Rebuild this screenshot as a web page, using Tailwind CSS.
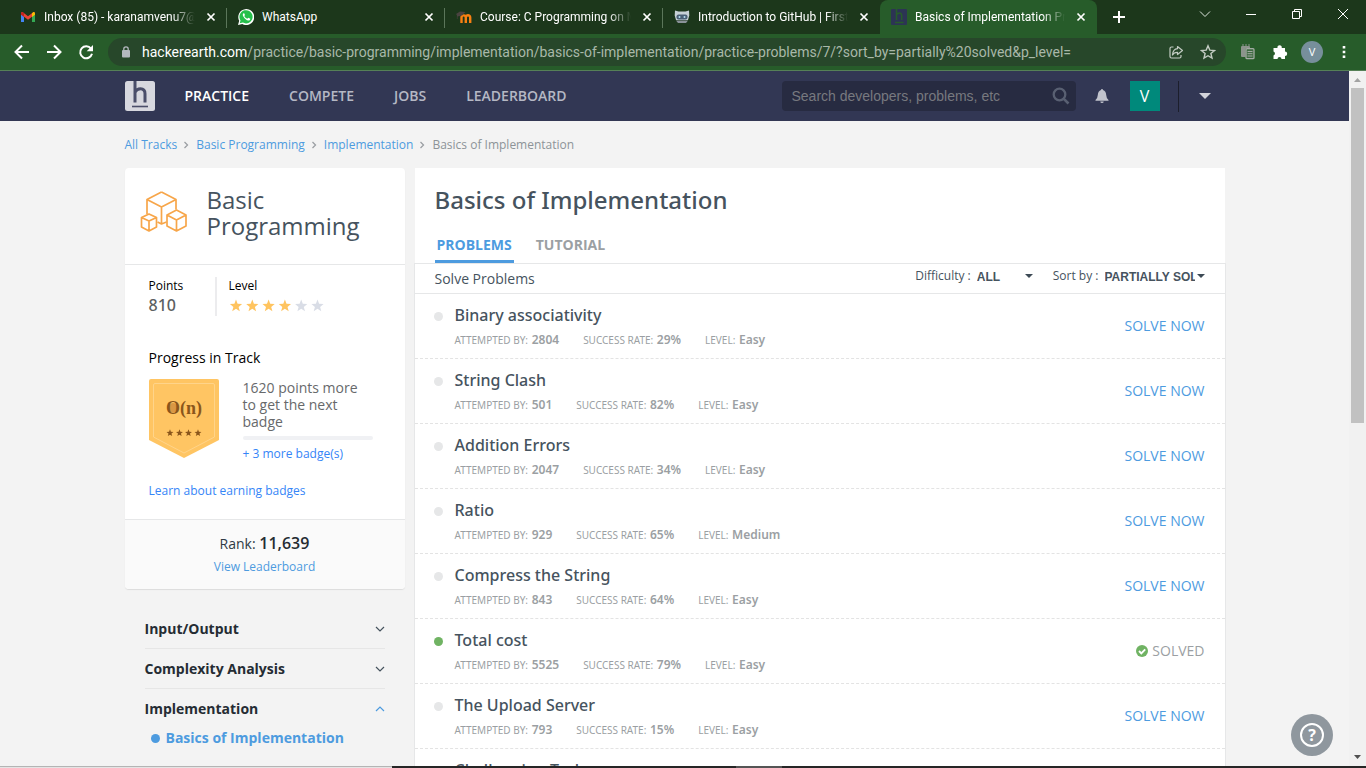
<!DOCTYPE html>
<html lang="en">
<head>
<meta charset="utf-8">
<title>Basics of Implementation Practice Problems</title>
<script src="https://cdn.jsdelivr.net/npm/@tailwindcss/browser@4"></script>
</head>
<body class="h-screen overflow-hidden flex flex-col bg-[#f3f3f3] font-['Open_Sans','Noto_Sans',sans-serif] text-[#46535e]">

<!-- Browser tab strip -->
<header class="shrink-0">
  <div class="h-[34px] bg-[#1c371b] flex pl-[9px] text-white text-xs font-['Roboto',sans-serif]">
    <div class="w-[218px] flex items-center pl-[11px] pr-2 gap-2 relative">
      <svg class="w-4 h-4 shrink-0" viewBox="0 0 16 16"><path d="M1 4v9h3V7z" fill="#4285f4"/><path d="M15 4v9h-3V7z" fill="#34a853"/><path d="M1 3.500L2.500 3 8 7.200 13.500 3 15 3.500 12 7.800 8 10.800 4 7.800z" fill="#ea4335"/><path d="M12 4.200L13.500 3q1.500-.2 1.500 1.500v1.300L12 8z" fill="#fbbc04"/><path d="M4 4.200L2.500 3Q1 2.800 1 4.500v1.300L4 8z" fill="#c5221f"/></svg>
      <span class="flex-1 min-w-0 whitespace-nowrap mask-r-from-85%">Inbox (85) - karanamvenu7@</span>
      <button aria-label="Close tab" class="w-4 h-4 shrink-0"><svg viewBox="0 0 16 16" class="w-4 h-4"><path d="M4.500 4.500l7 7M11.500 4.500l-7 7" stroke="#fff" stroke-width="1.700"/></svg></button>
      <i class="absolute right-0 top-2 h-5 w-px bg-[#5b765a]"></i>
    </div>
    <div class="w-[218px] flex items-center pl-[11px] pr-2 gap-2 relative">
      <svg class="w-4 h-4 shrink-0" viewBox="0 0 16 16"><path d="M0 16l1.200-4.200A8 8 0 1 1 4.300 15z" fill="#fff"/><path d="M1.700 14.300l.8-2.900A6.600 6.600 0 1 1 4.900 13.600z" fill="#25c04b"/><path d="M5.500 4.200c-1 .7-1 2 0 3.600 1.300 2.200 3 3.500 4.800 3.800 1.300.1 2-.8 2-1.800L10.300 8.800l-1 1C8 9.300 7 8.300 6.300 7l.7-1-.8-1.800z" fill="#fff"/></svg>
      <span class="flex-1 min-w-0 whitespace-nowrap">WhatsApp</span>
      <button aria-label="Close tab" class="w-4 h-4 shrink-0"><svg viewBox="0 0 16 16" class="w-4 h-4"><path d="M4.500 4.500l7 7M11.500 4.500l-7 7" stroke="#fff" stroke-width="1.700"/></svg></button>
      <i class="absolute right-0 top-2 h-5 w-px bg-[#5b765a]"></i>
    </div>
    <div class="w-[218px] flex items-center pl-[11px] pr-2 gap-2 relative">
      <svg class="w-4 h-4 shrink-0" viewBox="0 0 16 16"><path d="M5.500 14V8.500a2 2 0 0 1 4.300 0V14M9.800 8.500a2 2 0 0 1 4.400 0V14" fill="none" stroke="#f98012" stroke-width="2.400"/><path d="M0 5L4 2.500l5.500.5L6 6.500 1.500 7.500V10H.9V6z" fill="#4a4340"/></svg>
      <span class="flex-1 min-w-0 whitespace-nowrap mask-r-from-85%">Course: C Programming on M</span>
      <button aria-label="Close tab" class="w-4 h-4 shrink-0"><svg viewBox="0 0 16 16" class="w-4 h-4"><path d="M4.500 4.500l7 7M11.500 4.500l-7 7" stroke="#fff" stroke-width="1.700"/></svg></button>
      <i class="absolute right-0 top-2 h-5 w-px bg-[#5b765a]"></i>
    </div>
    <div class="w-[217px] flex items-center pl-[11px] pr-2 gap-2">
      <svg class="w-4 h-4 shrink-0" viewBox="0 0 16 16"><path d="M1 1.500l3.500 1h7l3.500-1 .3 5L14 11H2L.7 6.500z" fill="#c6d0d6"/><rect x="2.500" y="5.500" width="11" height="5" rx="2" fill="#4b6076"/><circle cx="5.500" cy="8" r="1" fill="#b4e0f2"/><circle cx="10.500" cy="8" r="1" fill="#b4e0f2"/><path d="M2 11.500h12l-2 2.500H4z" fill="#8a9299"/></svg>
      <span class="flex-1 min-w-0 whitespace-nowrap mask-r-from-85%">Introduction to GitHub | First</span>
      <button aria-label="Close tab" class="w-4 h-4 shrink-0"><svg viewBox="0 0 16 16" class="w-4 h-4"><path d="M4.500 4.500l7 7M11.500 4.500l-7 7" stroke="#fff" stroke-width="1.700"/></svg></button>
    </div>
    <div class="w-[217px] flex items-center pl-[11px] pr-2 gap-2 bg-[#275c2a] rounded-t-lg">
      <svg class="w-4 h-4 shrink-0" viewBox="0 0 16 16"><rect width="16" height="16" rx="1" fill="#2c3454"/><path d="M5.500 0v11M5.500 6q1-2 3-2t2.200 2.500V11M4 13.500h8.500" fill="none" stroke="#275c2a" stroke-width="1.500"/></svg>
      <span class="flex-1 min-w-0 whitespace-nowrap mask-r-from-85%">Basics of Implementation Pra</span>
      <button aria-label="Close tab" class="w-4 h-4 shrink-0"><svg viewBox="0 0 16 16" class="w-4 h-4"><path d="M4.500 4.500l7 7M11.500 4.500l-7 7" stroke="#fff" stroke-width="1.700"/></svg></button>
    </div>
    <button aria-label="New tab" class="ml-[15px]"><svg class="w-3.5 h-3.5" viewBox="0 0 14 14"><path d="M7 1v12M1 7h12" stroke="#fff" stroke-width="2"/></svg></button>
    <div class="ml-auto flex items-start pt-2">
      <button aria-label="Search tabs" class="w-[46px] flex justify-center"><svg class="w-3 h-3" viewBox="0 0 12 12"><path d="M1 3.500l5 5 5-5" fill="none" stroke="#dde5dd"/></svg></button>
      <button aria-label="Minimize" class="w-[46px] flex justify-center"><svg class="w-3 h-3" viewBox="0 0 12 12"><path d="M1 6.500h10" stroke="#fff"/></svg></button>
      <button aria-label="Restore" class="w-[46px] flex justify-center"><svg class="w-3 h-3" viewBox="0 0 12 12"><path d="M1.500 3.500h7v7h-7zM3.500 3.500v-2h7v7h-2" fill="none" stroke="#fff"/></svg></button>
      <button aria-label="Close" class="w-[46px] flex justify-center"><svg class="w-3 h-3" viewBox="0 0 12 12"><path d="M1 1l10 10M11 1L1 11" stroke="#fff"/></svg></button>
    </div>
  </div>
  <!-- Address bar -->
  <div class="h-[37px] bg-[#275c2a] border-b border-[#558057] flex items-center pl-[14px] pr-[14px]">
    <button aria-label="Back"><svg class="w-4 h-4" viewBox="0 0 16 16"><path d="M15 8H2M8 1.500L1.500 8 8 14.500" fill="none" stroke="#fff" stroke-width="2"/></svg></button>
    <button aria-label="Forward" class="ml-4"><svg class="w-4 h-4" viewBox="0 0 16 16"><path d="M1 8h13M8 1.500L14.500 8 8 14.500" fill="none" stroke="#fff" stroke-width="2"/></svg></button>
    <button aria-label="Reload" class="ml-4"><svg class="w-4 h-4" viewBox="0 0 16 16"><path d="M13 4.600A6 6 0 1 0 14 9.800" fill="none" stroke="#fff" stroke-width="2"/><path d="M15 1v6.300H8.700z" fill="#fff"/></svg></button>
    <div class="ml-[14px] flex-1 h-7 rounded-full bg-[#27472a] flex items-center pl-[13px] pr-[10px]">
      <svg class="w-2.5 h-3 shrink-0" viewBox="0 0 10 12"><rect x="1" y="4" width="8" height="7.500" rx="1" fill="#b3b8be"/><path d="M2.800 5V3a2.200 2.200 0 0 1 4.400 0v2" fill="none" stroke="#b3b8be" stroke-width="1.300"/></svg>
      <div class="ml-[11px] flex-1 font-['Roboto',sans-serif] text-sm leading-5 whitespace-nowrap text-[#a9b8a9]"><span class="text-white">hackerearth.com</span>/practice/basic-programming/implementation/basics-of-implementation/practice-problems/7/?sort_by=partially%20solved&amp;p_level=</div>
      <button aria-label="Share"><svg class="w-4 h-4" viewBox="0 0 16 16"><path d="M5.500 3H3.500Q2 3 2 4.500v8Q2 14 3.500 14h8q1.500 0 1.500-1.500V11" fill="none" stroke="#c3ccc3" stroke-width="1.200"/><path d="M9.500 2.500L14.500 6.500l-5 4V8.300Q6 8.200 4.500 11 5 5 9.500 4.700z" fill="none" stroke="#c3ccc3" stroke-width="1.200" stroke-linejoin="round"/></svg></button>
      <button aria-label="Bookmark" class="ml-4"><svg class="w-4 h-4" viewBox="0 0 16 16"><path d="M8 1.800l1.800 4.300 4.700.4-3.600 3 1.100 4.600L8 11.700l-4 2.400 1.100-4.600-3.600-3 4.700-.4z" fill="none" stroke="#c3ccc3" stroke-width="1.400"/></svg></button>
    </div>
    <svg class="ml-[14px] w-4 h-4" viewBox="0 0 16 16"><path d="M1 3q0-1 1-1h7q1 0 1 1v1H7Q5.500 4 5.500 5.500V13H2q-1 0-1-1z" fill="#8c948c"/><path d="M2 1h8" stroke="#8c948c" stroke-dasharray="2 1"/><rect x="6" y="4.700" width="8" height="10" rx="1" fill="#3f6b42" stroke="#a3aba3" stroke-width="1.300"/><path d="M7.500 7.500h5M7.500 9.700h5M7.500 12h5" stroke="#a3aba3"/></svg>
    <svg class="ml-4 w-4 h-4" viewBox="0 0 16 16"><path d="M1.500 4h4a2.200 2.200 0 1 1 4.200 0H13v3.500a2.200 2.200 0 1 1 0 4.400V15H9.500a2 2 0 0 0-4 0h-4v-3.500a2.100 2.100 0 0 0 0-4z" fill="#fff"/></svg>
    <button class="ml-[13px] w-[22px] h-[22px] rounded-full bg-[#778f9b] text-white text-[11px] leading-[22px] text-center">V</button>
    <svg class="ml-[13px] w-4 h-4" viewBox="0 0 16 16"><path d="M6.700 2h2.600v2.600H6.700zM6.700 6.700h2.600v2.600H6.700zM6.700 11.400h2.600V14H6.700z" fill="#fff"/></svg>
  </div>
</header>

<!-- Page viewport with scrollbar -->
<div class="flex-1 min-h-0 flex">
  <div class="flex-1 min-w-0 overflow-hidden">
    <nav class="h-[50px] bg-[#323754]">
      <div class="max-w-[1100px] h-full mx-auto flex items-center text-sm font-semibold text-[#b5b8c4]">
        <a href="#" aria-label="HackerEarth"><svg class="w-[30px] h-[30px]" viewBox="0 0 30 30"><rect width="30" height="30" rx="2.500" fill="#d7d8df"/><path d="M10 0v21.500M10 11.500Q11.500 7.800 15.500 7.800 20 7.800 20 12.800v8.700" fill="none" stroke="#4a4e6a" stroke-width="3"/><path d="M7 25.500h16" stroke="#4a4e6a" stroke-width="1.600"/></svg></a>
        <a href="#" class="ml-[30px] text-white">PRACTICE</a>
        <a href="#" class="ml-10">COMPETE</a>
        <a href="#" class="ml-10">JOBS</a>
        <a href="#" class="ml-10">LEADERBOARD</a>
        <div class="ml-auto w-[294px] h-[30px] rounded bg-[#272b41] flex items-center pl-[10px] pr-[6px]">
          <input type="text" aria-label="Search" placeholder="Search developers, problems, etc" class="flex-1 min-w-0 bg-transparent font-['Liberation_Sans',sans-serif] font-normal text-sm placeholder:text-[#77797f] outline-none">
          <svg class="w-[18px] h-[18px]" viewBox="0 0 18 18"><circle cx="7.500" cy="7.500" r="5.800" fill="none" stroke="#596072" stroke-width="2.300"/><path d="M11.800 11.800l4.700 4.700" stroke="#596072" stroke-width="2.600"/></svg>
        </div>
        <button aria-label="Notifications" class="ml-[18px]"><svg class="w-4 h-4" viewBox="0 0 16 16"><path d="M8 1a1 1 0 0 1 1 1Q12 3 12.200 7q.2 3.500 2.300 5v.8h-13V12q2.100-1.500 2.300-5Q4 3 7 2a1 1 0 0 1 1-1zM6.300 13.400h3.400a1.700 1.700 0 0 1-3.400 0z" fill="#c1c3cc"/></svg></button>
        <a href="#" class="ml-5 w-[30px] h-[30px] bg-[#00897b] text-white text-base font-medium leading-[30px] text-center">V</a>
        <div class="ml-[18px] w-px h-[31px] bg-[#1c1e2c]"></div>
        <button aria-label="Account menu" class="ml-5 mr-[14px]"><svg class="w-3 h-2" viewBox="0 0 12 8"><path d="M0 1h12L6 7z" fill="#d2d3da"/></svg></button>
      </div>
    </nav>

    <div class="max-w-[1100px] mx-auto">
      <nav class="flex items-center gap-[6px] h-[47px] text-xs text-[#4d9bdf]">
        <a href="#">All Tracks</a>
        <svg class="w-[7px] h-2" viewBox="0 0 7 8"><path d="M1.500 1l3 3-3 3" fill="none" stroke="#9b9fa3" stroke-width="1.300"/></svg>
        <a href="#">Basic Programming</a>
        <svg class="w-[7px] h-2" viewBox="0 0 7 8"><path d="M1.500 1l3 3-3 3" fill="none" stroke="#9b9fa3" stroke-width="1.300"/></svg>
        <a href="#">Implementation</a>
        <svg class="w-[7px] h-2" viewBox="0 0 7 8"><path d="M1.500 1l3 3-3 3" fill="none" stroke="#9b9fa3" stroke-width="1.300"/></svg>
        <span class="text-[#8d9398]">Basics of Implementation</span>
      </nav>

      <div class="flex items-start gap-[10px]">
        <!-- Track sidebar -->
        <aside class="w-[280px] shrink-0">
          <section class="bg-white rounded shadow-[0_1px_1px_#dcdcdc]">
            <div class="h-[97px] border-b border-[#e6e7e8] flex items-start pl-[15px] pt-[19px]">
              <svg class="w-12 h-12" viewBox="0 0 48 48" fill="none" stroke="#f7a64a" stroke-width="1.700" stroke-linejoin="round"><path d="M21.500 5L36 12.500v10M21.500 5L7 12.500V27M7 12.500l14.500 7.500L36 12.500M21.500 20v17l-4-2M21.500 37l5-2"/><path d="M9 27l7.500 3.500v9.500L9 44l-7.500-4v-9.500zM1.500 30.500L9 34l7.500-3.500M9 34v10M36.500 23L46 28v11l-9.500 5L27 39V28zM27 28l9.500 5L46 28M36.500 33v11"/></svg>
              <h2 class="ml-[19px] text-2xl leading-[26px] font-normal">Basic<br>Programming</h2>
            </div>
            <div class="px-6 pt-3 text-xs text-black">
              <div class="flex h-[39px]">
                <div class="w-[66px]"><p class="leading-[18px]">Points</p><p class="font-['Noto_Sans',sans-serif] text-base leading-5 font-medium text-[#5c5f62]">810</p></div>
                <div class="border-l-2 border-[#ececee] pl-3"><p class="leading-[18px]">Level</p>
                  <svg class="mt-[3px] w-24 h-4" viewBox="0 0 96 16"><defs><path id="star" d="M7 1.500l1.600 4.300 4.500.2-3.500 2.900 1.200 4.400L7 10.800l-3.800 2.500 1.200-4.400L.9 6l4.500-.2z"/></defs><g fill="#ffc45f"><use href="#star"/><use href="#star" x="16.300"/><use href="#star" x="32.600"/><use href="#star" x="48.900"/></g><g fill="#d9dde6"><use href="#star" x="65.200"/><use href="#star" x="81.500"/></g></svg></div>
              </div>
              <p class="mt-8 text-sm leading-5">Progress in Track</p>
              <div class="mt-[11px] flex">
                <svg class="w-[70px] h-20 shrink-0" viewBox="0 0 70 80"><path d="M2 0h66q2 0 2 2v59L35 79 0 61V2Q0 0 2 0z" fill="#ffc563"/><path d="M6 4.500h58q1.500 0 1.500 1.500v52L35 74 4.500 58V6Q4.500 4.500 6 4.500z" fill="none" stroke="#ffd48a"/><ellipse cx="24" cy="29" rx="4" ry="5" fill="#d99845"/><text x="35" y="35" text-anchor="middle" font-family="Liberation Serif" font-weight="bold" font-size="18" fill="#8a561b">O(n)</text><g fill="#8a561b"><use href="#star" transform="translate(17 49.500) scale(.57)"/><use href="#star" transform="translate(26.500 49.500) scale(.57)"/><use href="#star" transform="translate(35.500 49.500) scale(.57)"/><use href="#star" transform="translate(45 49.500) scale(.57)"/></g></svg>
                <div class="ml-6 w-[130px]">
                  <p class="text-sm leading-[17px] text-[#67696b]">1620 points more to get the next badge</p>
                  <div class="mt-[6px] h-1 rounded bg-[#f0f1f4]"></div>
                  <a href="#" class="block mt-[6px] leading-4 text-[#3585f7]">+ 3 more badge(s)</a>
                </div>
              </div>
              <a href="#" class="block mt-5 pb-[19px] leading-[18px] text-[#3585f7]">Learn about earning badges</a>
            </div>
            <div class="h-[70px] pt-3 border-t border-[#e6e7e8] bg-[#fafafa] rounded-b text-center">
              <p class="text-sm leading-[22px] text-[#2f3a44]">Rank: <b class="text-base leading-[22px] font-semibold text-[#252c33]">11,639</b></p>
              <a href="#" class="block mt-[2px] text-xs leading-5 text-[#4d9bdf]">View Leaderboard</a>
            </div>
          </section>
          <section class="mt-5 px-5 text-sm font-bold text-[#252c33]">
            <div class="h-10 border-b border-[#e6e6e6] flex items-center justify-between">Input/Output<svg class="w-2.5 h-2" viewBox="0 0 10 8"><path d="M1 2l4 4 4-4" fill="none" stroke="#46535e" stroke-width="1.200"/></svg></div>
            <div class="h-10 border-b border-[#e6e6e6] flex items-center justify-between">Complexity Analysis<svg class="w-2.5 h-2" viewBox="0 0 10 8"><path d="M1 2l4 4 4-4" fill="none" stroke="#46535e" stroke-width="1.200"/></svg></div>
            <div class="h-10 flex items-center justify-between">Implementation<svg class="w-2.5 h-2" viewBox="0 0 10 8"><path d="M1 6l4-4 4 4" fill="none" stroke="#4d9bdf" stroke-width="1.200"/></svg></div>
            <a href="#" class="flex items-center gap-[6px] pl-[6px] h-[18px] text-[#4d9bdf]"><i class="w-[9px] h-[9px] rounded-full bg-[#4d9bdf]"></i>Basics of Implementation</a>
          </section>
        </aside>

        <!-- Problem list -->
        <main class="flex-1 min-w-0 bg-white">
          <div class="px-5 pt-4 h-[95px]">
            <h1 class="font-['Noto_Sans',sans-serif] text-2xl leading-8 font-medium">Basics of Implementation</h1>
            <div class="mt-4 flex gap-[22px] text-sm font-bold text-[#9ba0a3]">
              <a href="#" class="h-[31px] px-[2px] leading-[26px] border-b-3 border-[#4d9bdf] text-[#4d9bdf]">PROBLEMS</a>
              <a href="#" class="h-[31px] leading-[26px]">TUTORIAL</a>
            </div>
          </div>
          <div class="-mx-px border border-[#e6e7e8]">
            <div class="h-[30px] px-5 border-b border-[#e6e7e8] flex text-xs">
              <h3 class="text-sm leading-[29px] font-normal">Solve Problems</h3>
              <div class="ml-auto flex leading-[24px]">
                <label for="difficulty">Difficulty :</label>
                <div class="relative ml-1.5 w-[56px]">
                  <select id="difficulty" class="w-full h-[25px] appearance-none bg-transparent font-['Liberation_Sans',sans-serif] font-bold text-xs"><option>ALL</option></select>
                  <svg class="absolute right-0 top-2 w-2 h-2 pointer-events-none" viewBox="0 0 8 8"><path d="M0 2h8L4 6z" fill="#3d4a55"/></svg>
                </div>
                <label for="sort" class="ml-5">Sort by :</label>
                <div class="relative ml-1.5 w-[100px] pr-2.5">
                  <select id="sort" class="w-full h-[25px] appearance-none bg-transparent font-['Liberation_Sans',sans-serif] font-bold text-xs"><option>PARTIALLY SOLVED</option></select>
                  <svg class="absolute right-0 top-2 w-2 h-2 pointer-events-none" viewBox="0 0 8 8"><path d="M0 2h8L4 6z" fill="#3d4a55"/></svg>
                </div>
              </div>
            </div>
            <div id="problems"></div>
          </div>
        </main>
      </div>
    </div>
  </div>

  <!-- Page scrollbar -->
  <div class="w-[17px] shrink-0 bg-[#f1f1f1] flex flex-col items-center">
    <svg class="w-[17px] h-[17px] shrink-0" viewBox="0 0 17 17"><path d="M5 11h7L8.500 7z" fill="#a3a3a3"/></svg>
    <div class="w-[13px] h-[335px] bg-[#c1c1c1]"></div>
    <svg class="mt-auto w-[17px] h-[17px] shrink-0" viewBox="0 0 17 17"><path d="M5 6h7l-3.500 4z" fill="#505050"/></svg>
  </div>
</div>

<footer class="shrink-0 h-0.5 flex"><div class="w-[392px] border-t border-[#b4b4b4] bg-[#e4e4e4]"></div><div class="w-[344px] bg-[#262626]"></div><div class="w-[46px] bg-[#555]"></div><div class="flex-1 bg-[#262626]"></div></footer>

<button aria-label="Help" class="fixed right-[33px] bottom-3 w-[42px] h-[42px] rounded-full bg-[#8f979e] flex items-center justify-center"><span class="w-6 h-6 rounded-full border-2 border-white text-white text-base leading-5 font-bold">?</span></button>

<template id="row">
  <article class="h-[65px] border-b border-dashed border-[#e3e3e3] flex items-center pr-5">
    <i class="dot self-start mt-[18px] ml-[19px] w-[9px] h-[9px] rounded-full bg-[#e6e7e8]"></i>
    <div class="ml-3 font-['Noto_Sans',sans-serif]">
      <a href="#" class="name block text-base leading-6 font-medium"></a>
      <p class="mt-[3px] flex gap-6 text-[10px] leading-5 text-[#9b9fa3]">
        <span>ATTEMPTED BY: <b class="tries ml-px text-xs font-semibold"></b></span>
        <span>SUCCESS RATE: <b class="rate ml-px text-xs font-semibold"></b></span>
        <span>LEVEL: <b class="level ml-px text-xs font-semibold"></b></span>
      </p>
    </div>
    <div class="action ml-auto text-sm"></div>
  </article>
</template>
<script>
  const problems = [
    ['Binary associativity', 2804, '29%', 'Easy'],
    ['String Clash', 501, '82%', 'Easy'],
    ['Addition Errors', 2047, '34%', 'Easy'],
    ['Ratio', 929, '65%', 'Medium'],
    ['Compress the String', 843, '64%', 'Easy'],
    ['Total cost', 5525, '79%', 'Easy', true],
    ['The Upload Server', 793, '15%', 'Easy'],
    ['Challenging Tasks', 612, '41%', 'Easy'],
  ];
  const solved = '<span class="flex items-center gap-1 text-[#9b9fa3]"><svg class="w-3 h-3" viewBox="0 0 12 12"><circle cx="6" cy="6" r="6" fill="#70b363"/><path d="M3 6l2.300 2.300L9.200 4.300" fill="none" stroke="#fff" stroke-width="1.900"/></svg>SOLVED</span>';
  const open = '<a href="#" class="text-[#4d9bdf]">SOLVE NOW</a>';
  for (const [name, tries, rate, level, done] of problems) {
    const row = document.getElementById('row').content.cloneNode(true);
    row.querySelector('.name').textContent = name;
    row.querySelector('.tries').textContent = tries;
    row.querySelector('.rate').textContent = rate;
    row.querySelector('.level').textContent = level;
    row.querySelector('.action').innerHTML = done ? solved : open;
    if (done) row.querySelector('.dot').classList.replace('bg-[#e6e7e8]', 'bg-[#70b363]');
    document.getElementById('problems').append(row);
  }
</script>
</body>
</html>
